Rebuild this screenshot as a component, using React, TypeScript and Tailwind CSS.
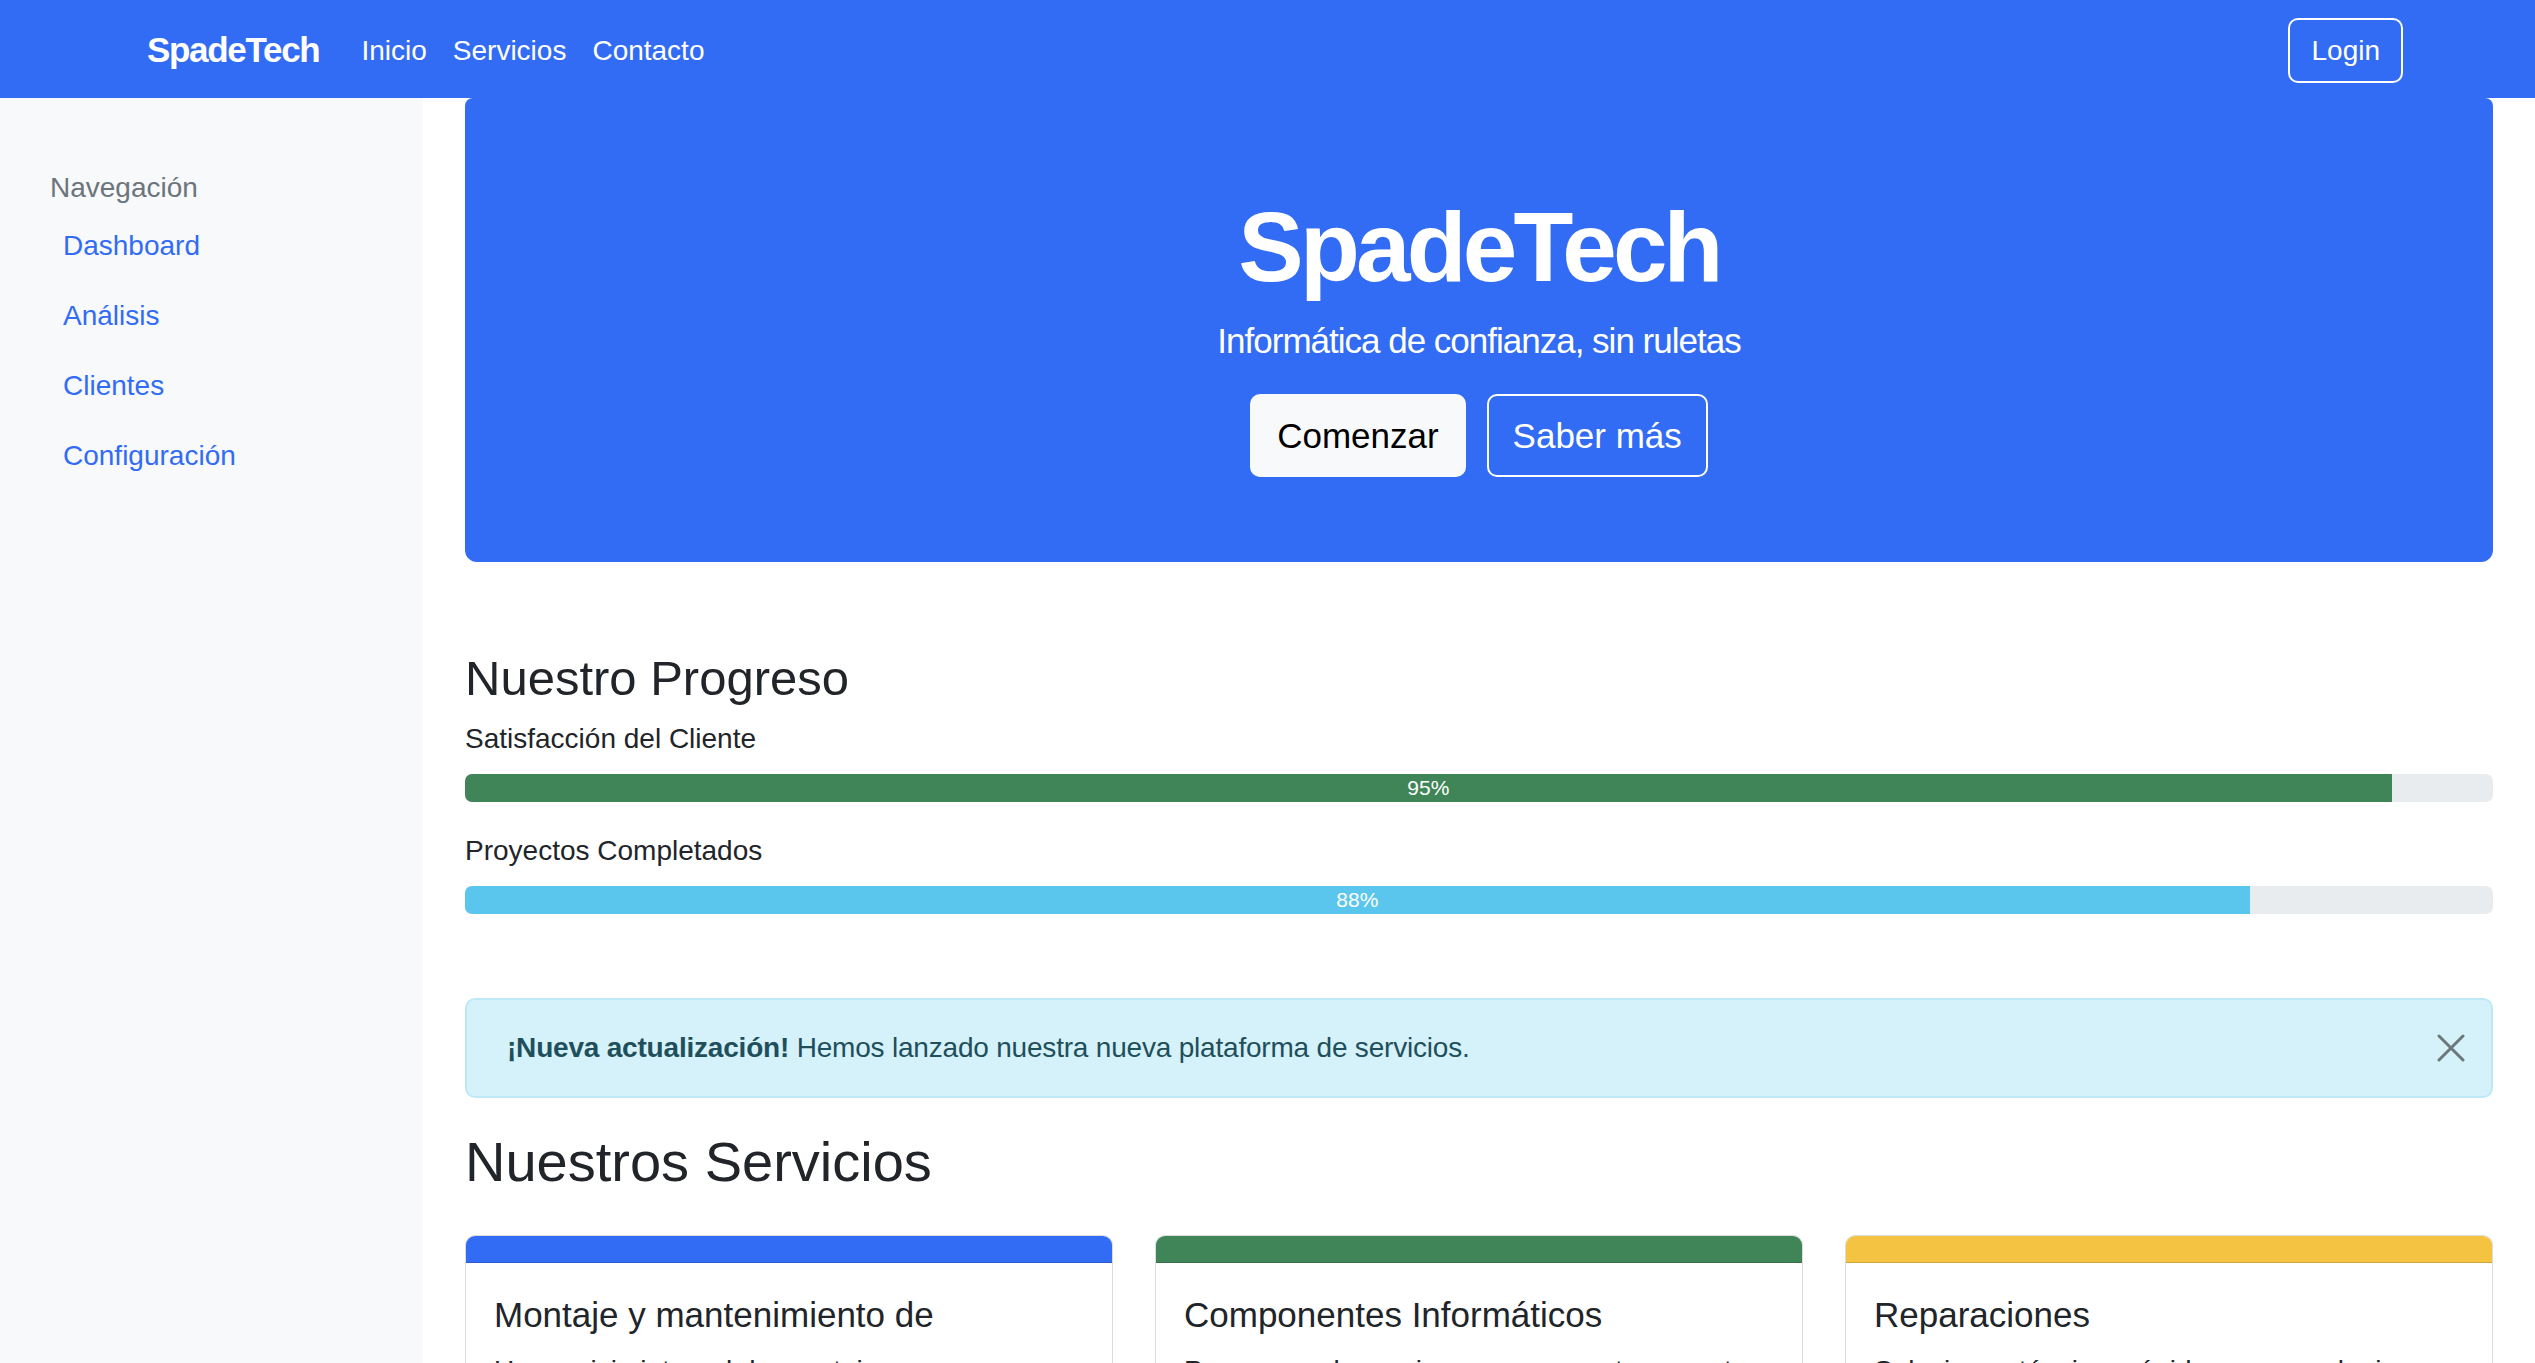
import React from "react";

const sideLinks = ["Dashboard", "Análisis", "Clientes", "Configuración"];

const cards = [
  {
    color: "bg-[#336cf4]",
    title: "Montaje y mantenimiento de",
    text: "Un servicio integral de montaje y mantenimiento de equipos.",
  },
  {
    color: "bg-[#408558]",
    title: "Componentes Informáticos",
    text: "Proveemos los mejores componentes para tu ordenador.",
  },
  {
    color: "bg-[#f4c342]",
    title: "Reparaciones",
    text: "Soluciones técnicas rápidas para cualquier avería de tu equipo.",
  },
];

function Bar({ pct, color }: { pct: number; color: string }) {
  return (
    <div className="mt-[14px] flex h-[28px] overflow-hidden rounded-[7px] bg-[#e9ecef]">
      <div
        className={`flex items-center justify-center text-[21px] leading-none text-white ${color}`}
        style={{ width: `${pct}%` }}
      >
        {pct}%
      </div>
    </div>
  );
}

export default function App() {
  return (
    <div className="min-h-screen bg-white font-['Liberation_Sans',Arial,sans-serif] text-[#212529]">
      <nav className="flex h-[98px] items-center bg-[#336cf4] pl-[147px] pr-[132px] pt-[3px]">
        <span className="mr-[29px] text-[35px] font-bold leading-[1.5] tracking-[-1.3px] text-white">
          SpadeTech
        </span>
        <ul className="flex">
          {["Inicio", "Servicios", "Contacto"].map((t) => (
            <li key={t}>
              <a className="block px-[13px] text-[28px] leading-[42px] text-white">{t}</a>
            </li>
          ))}
        </ul>
        <button className="ml-auto h-[65px] rounded-[10px] border-2 border-white px-[21px] text-[28px] leading-none text-white">
          Login
        </button>
      </nav>

      <div className="flex">
        <aside className="w-[423px] shrink-0 bg-[#f8f9fa] pt-[73px]">
          <h6 className="pl-[50px] text-[28px] font-medium leading-[34px] text-[#6c757d]">Navegación</h6>
          <ul className="mt-[6px]">
            {sideLinks.map((l) => (
              <li key={l}>
                <a className="block py-[14px] pl-[63px] text-[28px] leading-[42px] text-[#336cf4]">{l}</a>
              </li>
            ))}
          </ul>
        </aside>

        <main className="min-w-0 flex-1 px-[42px] pb-[60px]">
          <section className="flex flex-col items-center rounded-b-[12px] rounded-t-[8px] bg-[#336cf4] pb-[85px] pt-[91px] text-white">
            <h1 className="text-[98px] font-bold leading-[1.2] tracking-[-3.8px]">SpadeTech</h1>
            <p className="mt-[8px] text-[35px] font-light leading-[1.5] tracking-[-1px]">
              Informática de confianza, sin ruletas
            </p>
            <div className="mt-[27px] flex gap-[21px]">
              <button className="h-[83px] rounded-[10px] bg-[#f8f9fa] px-[27px] text-[35px] leading-none text-black">
                Comenzar
              </button>
              <button className="h-[83px] rounded-[10px] border-2 border-white px-[24px] text-[35px] leading-none text-white">
                Saber más
              </button>
            </div>
          </section>

          <section className="mt-[87px]">
            <h3 className="text-[49px] font-medium leading-[1.2]">Nuestro Progreso</h3>
            <div className="mt-[10px] text-[28px] leading-[42px]">Satisfacción del Cliente</div>
            <Bar pct={95} color="bg-[#408558]" />
            <div className="mt-[28px] text-[28px] leading-[42px]">Proyectos Completados</div>
            <Bar pct={88} color="bg-[#5bc6ed]" />
          </section>

          <div className="mt-[84px] flex h-[100px] items-center justify-between rounded-[10px] border-2 border-[#bde9f6] bg-[#d5f2fa] pl-[40px] pr-[26px] text-[28px] tracking-[-0.2px] text-[#1f4f5b]">
            <p>
              <strong className="font-bold">¡Nueva actualización!</strong> Hemos lanzado nuestra nueva plataforma de
              servicios.
            </p>
            <svg width="28" height="28" viewBox="0 0 28 28" fill="none" stroke="#6b777b" strokeWidth="3" strokeLinecap="round">
              <path d="M2 2 L26 26 M26 2 L2 26" />
            </svg>
          </div>

          <h2 className="mt-[30px] text-[56px] font-medium leading-[1.2]">Nuestros Servicios</h2>

          <div className="mt-[40px] grid grid-cols-3 gap-[42px]">
            {cards.map((c) => (
              <div key={c.title} className="overflow-hidden rounded-[10px] border border-[#dcdcdc] bg-white">
                <div className={`h-[27px] border-b border-black/15 ${c.color}`} />
                <div className="px-[28px] pb-[28px] pt-[31px]">
                  <h5 className="text-[35px] font-medium leading-[1.2]">{c.title}</h5>
                  <p className="mt-[14px] text-[28px] leading-[1.5]">{c.text}</p>
                </div>
              </div>
            ))}
          </div>
        </main>
      </div>
    </div>
  );
}
